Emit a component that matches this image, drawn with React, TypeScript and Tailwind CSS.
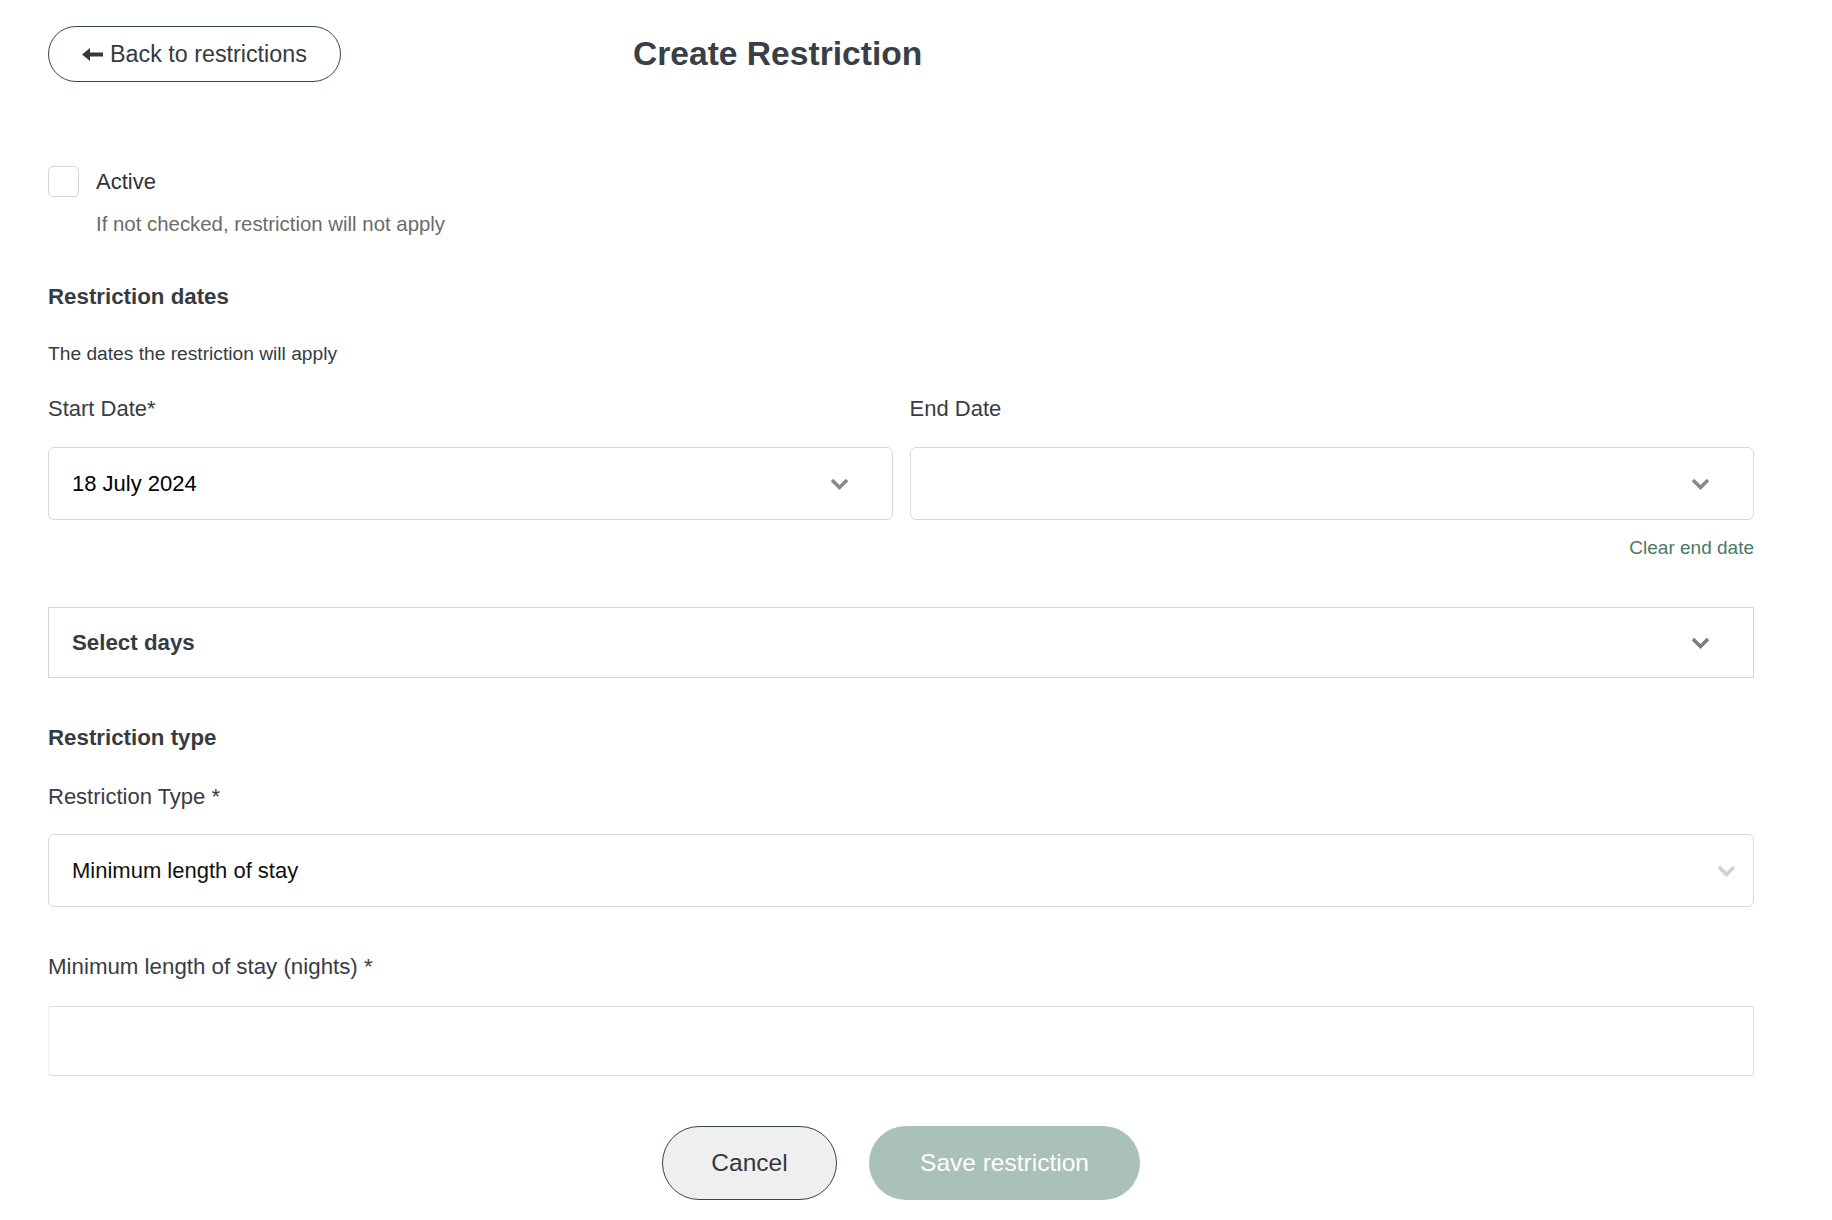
import { useState } from "react";

const FONT = { fontFamily: '"Liberation Sans", Arial, Helvetica, sans-serif' };

/* ─── small drawings ─────────────────────────────── */
function BackArrow() {
  return (
    <svg width="21" height="13" viewBox="0 0 21 13" className="shrink-0">
      <path d="M0 6.5 L8 0 V4.5 H21 V8.5 H8 V13 Z" fill="#343a40" />
    </svg>
  );
}

function Chevron({ color = "#8a8a8a" }: { color?: string }) {
  return (
    <svg width="19" height="12" viewBox="0 0 19 12" className="shrink-0">
      <polyline
        points="2,2 9.5,9.5 17,2"
        fill="none"
        stroke={color}
        strokeWidth="3.6"
        strokeLinecap="butt"
        strokeLinejoin="miter"
      />
    </svg>
  );
}

/* ─── fields ─────────────────────────────────────── */
function DateField({ label, value }: { label: string; value?: string }) {
  return (
    <div className="flex flex-col">
      <div className="text-[22px] leading-[26px] text-[#383d45]">{label}</div>
      <button className="mt-[25px] h-[73px] w-full rounded-[6px] border border-[#d9d9dd] bg-white flex items-center justify-between pl-[23px] pr-[43px]">
        <span className="text-[22px] text-black">{value}</span>
        <Chevron />
      </button>
    </div>
  );
}

/* ─── MAIN PAGE ───────────────────────────────────── */
export default function App() {
  const [active, setActive] = useState(false);
  const [nights, setNights] = useState("");

  return (
    <div className="min-h-[1220px] bg-white text-[#363b43]" style={FONT}>
      <div className="ml-[48px] w-[1706px] pt-[26px] pb-[20px] flex flex-col">
        {/* header */}
        <div className="flex items-center h-[56px]">
          <button className="w-[293px] h-[56px] rounded-full border border-[#2e4a3f] bg-white flex items-center gap-[7px] pl-[33px] text-[23.3px] text-[#343a40]">
            <BackArrow />
            <span>Back to restrictions</span>
          </button>
          <h1 className="ml-[292px] text-[33.6px] font-bold text-[#3a3f46]">Create Restriction</h1>
        </div>

        {/* active */}
        <label className="mt-[84px] flex items-center gap-[17px] h-[31px] cursor-pointer">
          <span
            onClick={() => setActive(!active)}
            className="w-[31px] h-[31px] rounded-[5px] border border-[#d5d5da] bg-white"
          />
          <span className="text-[22px] text-[#2f333a]">Active</span>
        </label>
        <div className="mt-[15px] pl-[48px] text-[20.4px] leading-[24px] text-[#6b6b6b]">
          If not checked, restriction will not apply
        </div>

        {/* dates */}
        <div className="mt-[48px] text-[22.3px] leading-[26px] font-bold">Restriction dates</div>
        <div className="mt-[33px] text-[19.2px] leading-[22px]">The dates the restriction will apply</div>

        <div className="mt-[31px] grid grid-cols-2 gap-x-[17px]">
          <DateField label="Start Date*" value="18 July 2024" />
          <DateField label="End Date" />
        </div>
        <div className="mt-[17px] text-right text-[19px] leading-[22px] text-[#4b7a64]">Clear end date</div>

        {/* days */}
        <button className="mt-[48px] h-[71px] w-full border border-[#d6d6da] bg-white flex items-center justify-between pl-[23px] pr-[43px]">
          <span className="text-[22.3px] font-bold text-[#363b43]">Select days</span>
          <Chevron color="#7d7d7d" />
        </button>

        {/* type */}
        <div className="mt-[47px] text-[22.3px] leading-[26px] font-bold">Restriction type</div>
        <div className="mt-[33px] text-[22px] leading-[26px] text-[#383d45]">Restriction Type *</div>
        <button className="mt-[24px] h-[73px] w-full rounded-[6px] border border-[#d9d9dd] bg-white flex items-center justify-between pl-[23px] pr-[17px]">
          <span className="text-[22px] text-[#111]">Minimum length of stay</span>
          <Chevron color="#d0d0d0" />
        </button>

        <div className="mt-[47px] text-[22.3px] leading-[26px] text-[#383d45]">Minimum length of stay (nights) *</div>
        <input
          value={nights}
          onChange={(e) => setNights(e.target.value)}
          className="mt-[26px] h-[70px] w-full rounded-[3px] border border-[#dcdce0] border-l-[#eeeeee] bg-white px-[23px] text-[22px] outline-none"
        />

        {/* actions */}
        <div className="mt-[50px] flex justify-center gap-[32px]">
          <button className="w-[175px] h-[74px] rounded-full border border-[#2e4a3f] bg-[#efefef] text-[24.5px] text-[#333840]">
            Cancel
          </button>
          <button className="w-[271px] h-[74px] rounded-full bg-[#a9c1b8] text-[24.5px] text-white">
            Save restriction
          </button>
        </div>
      </div>
    </div>
  );
}
